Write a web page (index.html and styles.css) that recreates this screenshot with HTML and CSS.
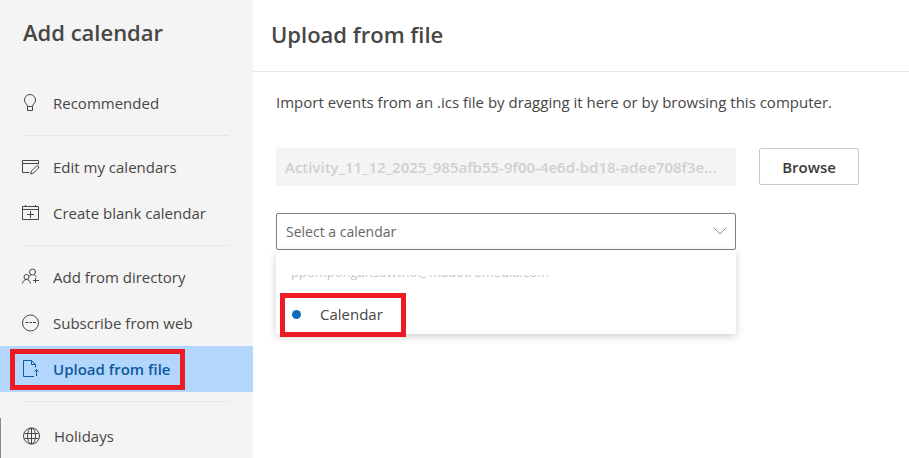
FILE: index.html
```html
<!DOCTYPE html>
<html lang="en">
<head>
    <meta charset="UTF-8">
    <meta name="viewport" content="width=device-width, initial-scale=1.0">
    <title>Add calendar</title>
    <link rel="stylesheet" href="styles.css">
</head>
<body>
    <aside class="sidebar">
        <h1>Add calendar</h1>
        <nav class="menu">
            <a href="#recommended" class="item">
                <svg class="icon" viewBox="0 0 18 18"><path d="M5.500 12.500c0-2.500-3-3.200-3-6.500a5.500 5.500 0 0 1 11 0c0 3.300-3 4-3 6.500v4h-5zM5.500 12.500h5"/></svg>
                Recommended
            </a>
            <hr>
            <a href="#edit" class="item">
                <svg class="icon" viewBox="0 0 18 18"><path d="M7 14.500H.5v-12h16v4M.5 5.500h16M8.500 16l1-3 5-5c1.500-1 3 .5 2 2l-5 5z"/></svg>
                Edit my calendars
            </a>
            <a href="#create" class="item">
                <svg class="icon" viewBox="0 0 18 18"><path d="M.5 2.500h16v13H.5zM.5 5.500h16M3.500 1v2M13.500 1v2M8.500 7v7M5 10.500h7"/></svg>
                Create blank calendar
            </a>
            <hr>
            <a href="#directory" class="item">
                <svg class="icon" viewBox="0 0 18 18"><circle cx="10.500" cy="4" r="3"/><circle cx="4.500" cy="9" r="2.500"/><path d="M.5 15.500c.3-2.500 2-4 4-4s3.700 1.500 4 4M7.500 8.500l1.500-2M12.200 6.600c1 .6 1.600 1.400 2.100 2.700M13.500 10v5M11 12.500h6"/></svg>
                Add from directory
            </a>
            <a href="#web" class="item">
                <svg class="icon" viewBox="0 0 18 18"><circle cx="8.500" cy="9" r="8"/><path d="M3.500 8.500h3M7.500 8.500h2.500M11 8.500h3"/></svg>
                Subscribe from web
            </a>
            <a href="#upload" class="item active">
                <svg class="icon" viewBox="0 0 18 18"><path d="M12 16.500H1.500V.5h8l4 4v3M9.500.5v4h4M14.500 16V9.500M12.500 11.500l2-2 2 2"/></svg>
                Upload from file
                <span class="mark mark-upload"></span>
            </a>
            <hr>
            <div class="more">
                <a href="#holidays" class="item">
                    <svg class="icon" viewBox="0 0 18 18"><circle cx="8.500" cy="9" r="8"/><ellipse cx="8.500" cy="9" rx="4" ry="8"/><path d="M8.500 1v16M1.500 6.500h14M1.500 11.500h14"/></svg>
                    Holidays
                </a>
            </div>
        </nav>
    </aside>

    <main class="panel">
        <header class="panel-head">
            <h2>Upload from file</h2>
        </header>
        <form class="upload">
            <p>Import events from an .ics file by dragging it here or by browsing this computer.</p>
            <div class="row">
                <input type="text" class="file-name" aria-label="File name" value="Activity_11_12_2025_985afb55-9f00-4e6d-bd18-adee708f3e..." disabled>
                <button type="button" class="browse">Browse</button>
            </div>
            <div class="picker">
                <select class="calendar" aria-label="Select a calendar">
                    <option>Select a calendar</option>
                </select>
                <svg class="chevron" viewBox="0 0 16 10"><path d="M1.500 1.500L8 8l6.500-6.500"/></svg>
                <div class="dropdown">
                    <div class="account">ppompongahsowtho@madotromedia.com</div>
                    <button type="button" class="choice">
                        <span class="dot"></span>
                        Calendar
                        <span class="mark mark-choice"></span>
                    </button>
                </div>
            </div>
        </form>
    </main>
</body>
</html>
```

FILE: styles.css
```css
* {
  box-sizing: border-box;
}
body {
  display: flex;
  min-height: 100vh;
  margin: 0;
  font-family: "Segoe UI", "Open Sans", "Noto Sans", sans-serif;
  font-size: 15px;
  line-height: 20px;
  color: #484644;
  background-color: #fff;
}
h1, h2 {
  margin: 0;
  font-size: 22px;
  line-height: 28px;
  font-weight: 600;
}
h1 {
  padding: 18px 23px 34px;
}
button, input, select {
  font-family: inherit;
  font-size: 15px;
}

/* left menu */
.sidebar {
  display: flex;
  flex-direction: column;
  flex: 0 0 253px;
  background-color: #f4f4f4;
}
.menu {
  display: flex;
  flex-direction: column;
  flex: 1;
}
.menu hr {
  width: 206px;
  margin: 9px 0 8px 23px;
  border: 0;
  border-top: 1px solid #e6e6e6;
}
.item {
  position: relative;
  display: flex;
  align-items: center;
  gap: 13px;
  height: 46px;
  padding-left: 22px;
  color: #484644;
  text-decoration: none;
}
.active {
  color: #0f5a9c;
  background-color: #b3d6fc;
  font-weight: 600;
}
.icon {
  width: 18px;
  height: 18px;
  fill: none;
  stroke: currentColor;
}
.more {
  flex: 1;
  margin-top: 8px;
  border-left: 1px solid #8a8a8a;
}
.more .item {
  height: 36px;
}

/* red highlight boxes */
.mark {
  position: absolute;
  border: 5px solid #ed1c24;
  pointer-events: none;
}
.mark-upload {
  top: 3px;
  left: 10px;
  width: 175px;
  height: 41px;
}
.mark-choice {
  top: -1px;
  left: 4px;
  width: 126px;
  height: 44px;
}

/* right side */
.panel {
  flex: 1;
  min-width: 0;
}
.panel-head {
  padding: 20px 18px 23px;
  border-bottom: 1px solid #eaeaea;
}
.upload {
  padding: 20px 50px 20px 23px;
}
.upload p {
  margin: 0 0 36px;
}
.row {
  display: flex;
  gap: 23px;
}
.file-name {
  flex: 1;
  min-width: 0;
  height: 38px;
  padding: 0 9px;
  border: 0;
  color: #d0d0d0;
  background-color: #f4f4f4;
  font-weight: 600;
}
.browse {
  width: 100px;
  height: 37px;
  border: 1px solid #c8c8c8;
  border-radius: 2px;
  color: #3b3a39;
  background-color: #fff;
  font-weight: 600;
}
.picker {
  position: relative;
  margin: 27px 123px 0 0;
}
.calendar {
  display: block;
  width: 100%;
  height: 37px;
  padding: 0 9px;
  appearance: none;
  border: 1px solid #808080;
  border-radius: 2px;
  color: #666;
  background-color: #fff;
  font-size: 14px;
}
.chevron {
  position: absolute;
  top: 13px;
  right: 8px;
  width: 16px;
  height: 10px;
  fill: none;
  stroke: #8a8a8a;
}
.dropdown {
  position: absolute;
  top: 37px;
  left: 0;
  width: 100%;
  padding-top: 25px;
  border-radius: 2px;
  background-color: #fff;
  box-shadow: 0 3px 8px rgba(0, 0, 0, 0.18);
}
/* only a thin strip of the account name shows */
.account {
  display: flex;
  align-items: flex-end;
  height: 5px;
  margin: 0 15px 14px;
  overflow: hidden;
  color: #c4c4c4;
  font-size: 13px;
  line-height: 16px;
}
.choice {
  position: relative;
  display: flex;
  align-items: center;
  gap: 19px;
  width: 100%;
  height: 40px;
  padding: 0 16px;
  border: 0;
  color: #484644;
  background-color: transparent;
}
.dot {
  width: 9px;
  height: 9px;
  border-radius: 50%;
  background-color: #0f6cbd;
}
```
